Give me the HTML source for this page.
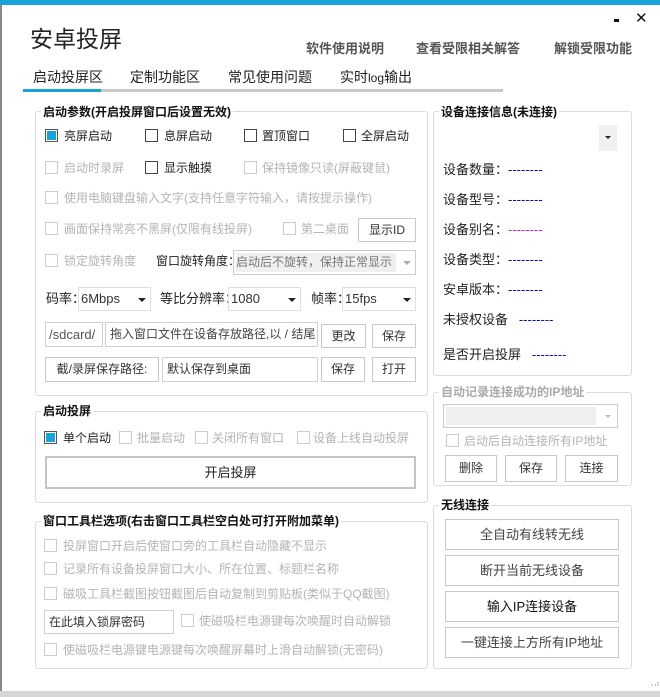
<!DOCTYPE html>
<html><head><meta charset="utf-8"><style>
*{margin:0;padding:0;box-sizing:border-box}
body{width:660px;height:697px;position:relative;overflow:hidden;background:#fff;font-family:"Liberation Sans","Microsoft YaHei","Noto Sans CJK SC",sans-serif;font-size:12px;color:#222}
.a{position:absolute;white-space:nowrap}
.grp{position:absolute;border:1px solid #dcdcdc;border-radius:3px}
.gt{position:absolute;background:#fff;font-weight:bold;font-size:12px;padding:0 2px;line-height:14px;color:#111}
.cb{position:absolute;width:13px;height:13px;border:1px solid #444;background:#fff}
.cb.d{border-color:#ccc}
.cb.on{border-color:#555;background:#1aa3d6;box-shadow:inset 0 0 0 1px #fff}
.l{position:absolute;white-space:nowrap;font-size:12px;line-height:14px}
.dis{color:#b4b4b4}
.btn{position:absolute;border:1px solid #c8c8c8;background:#fff;text-align:center;font-size:12px;color:#333}
.inp{position:absolute;border:1px solid #d0d0d0;background:#fff;font-size:12px;color:#333;padding-left:4px}
.arr{position:absolute;width:0;height:0;border-left:4px solid transparent;border-right:4px solid transparent;border-top:4px solid #222}
.dash{color:#1010a0;letter-spacing:0px}
</style></head><body>
<div class="a" style="left:0;top:0;width:660px;height:5px;background:#1aa3d6"></div>
<div class="a" style="left:0;top:5px;width:2px;height:692px;background:#888"></div>
<div class="a" style="left:0;top:691px;width:660px;height:6px;background:#d6d6d6"></div>

<div class="a" style="left:30px;top:25px;font-size:23px;color:#222;line-height:28px">安卓投屏</div>
<div class="a" style="left:306px;top:38px;font-size:13px;font-weight:bold;color:#555">软件使用说明</div>
<div class="a" style="left:416px;top:38px;font-size:13px;font-weight:bold;color:#555">查看受限相关解答</div>
<div class="a" style="left:554px;top:38px;font-size:13px;font-weight:bold;color:#555">解锁受限功能</div>
<div class="a" style="left:614px;top:19px;width:5px;height:3px;background:#111"></div>
<div class="a" style="left:635px;top:9px;font-size:15px;color:#111">✕</div>

<div class="a" style="left:33px;top:67px;font-size:14px">启动投屏区</div>
<div class="a" style="left:130px;top:67px;font-size:14px">定制功能区</div>
<div class="a" style="left:228px;top:67px;font-size:14px">常见使用问题</div>
<div class="a" style="left:340px;top:67px;font-size:14px">实时<span style="font-size:12px">log</span>输出</div>
<div class="a" style="left:23px;top:89px;width:480px;height:3px;background:#c8c8c8"></div>
<div class="a" style="left:23px;top:89px;width:78px;height:3px;background:#1aa3d6"></div>

<!-- group 1 -->
<div class="grp" style="left:35px;top:111px;width:393px;height:285px"></div>
<div class="gt" style="left:41px;top:105px">启动参数(开启投屏窗口后设置无效)</div>
<div class="cb on" style="left:45px;top:129px"></div><div class="l" style="left:64px;top:129px">亮屏启动</div>
<div class="cb" style="left:145px;top:129px"></div><div class="l" style="left:164px;top:129px">息屏启动</div>
<div class="cb" style="left:244px;top:129px"></div><div class="l" style="left:262px;top:129px">置顶窗口</div>
<div class="cb" style="left:343px;top:129px"></div><div class="l" style="left:361px;top:129px">全屏启动</div>

<div class="cb d" style="left:45px;top:161px"></div><div class="l dis" style="left:64px;top:161px">启动时录屏</div>
<div class="cb" style="left:145px;top:161px"></div><div class="l" style="left:164px;top:161px">显示触摸</div>
<div class="cb d" style="left:244px;top:161px"></div><div class="l dis" style="left:262px;top:161px">保持镜像只读(屏蔽键鼠)</div>

<div class="cb d" style="left:45px;top:191px"></div><div class="l dis" style="left:64px;top:191px">使用电脑键盘输入文字(支持任意字符输入，请按提示操作)</div>

<div class="cb d" style="left:45px;top:222px"></div><div class="l dis" style="left:64px;top:222px">画面保持常亮不黑屏(仅限有线投屏)</div>
<div class="cb d" style="left:283px;top:222px"></div><div class="l dis" style="left:301px;top:222px">第二桌面</div>
<div class="btn" style="left:358px;top:218px;width:58px;height:24px;line-height:22px">显示ID</div>

<div class="cb d" style="left:45px;top:254px"></div><div class="l dis" style="left:64px;top:254px">锁定旋转角度</div>
<div class="l" style="left:156px;top:254px">窗口旋转角度：</div>
<div class="inp" style="left:233px;top:250px;width:183px;height:25px;border-color:#ccc;padding:2px"><div style="background:#f0f0f0;height:19px;width:160px;line-height:19px;color:#777">启动后不旋转，保持正常显示</div></div>
<div class="arr" style="left:403px;top:261px;border-top-color:#aaa"></div>

<div class="l" style="left:46px;top:292px;font-size:13px">码率：</div>
<div class="inp" style="left:78px;top:287px;width:73px;height:24px;line-height:22px;font-size:13px;padding-left:2px;border-color:#e0e0e0">6Mbps</div><div class="arr" style="left:138px;top:298px"></div>
<div class="l" style="left:160px;top:292px;font-size:13px">等比分辨率：</div>
<div class="inp" style="left:228px;top:287px;width:73px;height:24px;line-height:22px;font-size:13px;padding-left:2px;border-color:#e0e0e0">1080</div><div class="arr" style="left:288px;top:298px"></div>
<div class="l" style="left:311px;top:292px;font-size:13px">帧率：</div>
<div class="inp" style="left:342px;top:287px;width:74px;height:24px;line-height:22px;font-size:13px;padding-left:2px;border-color:#e0e0e0">15fps</div><div class="arr" style="left:403px;top:298px"></div>

<div class="inp" style="left:45px;top:322px;width:58px;height:25px;line-height:23px;color:#555;font-size:13px;padding-left:3px">/sdcard/</div>
<div class="inp" style="left:105px;top:322px;width:213px;height:25px;line-height:23px;color:#444">拖入窗口文件在设备存放路径,以 / 结尾</div>
<div class="btn" style="left:321px;top:324px;width:45px;height:24px;line-height:22px">更改</div>
<div class="btn" style="left:372px;top:324px;width:44px;height:24px;line-height:22px">保存</div>

<div class="btn" style="left:45px;top:357px;width:114px;height:25px;line-height:23px">截/录屏保存路径:</div>
<div class="inp" style="left:162px;top:357px;width:156px;height:25px;line-height:23px">默认保存到桌面</div>
<div class="btn" style="left:321px;top:357px;width:44px;height:25px;line-height:23px">保存</div>
<div class="btn" style="left:372px;top:357px;width:44px;height:25px;line-height:23px">打开</div>

<!-- group 2 -->
<div class="grp" style="left:35px;top:411px;width:393px;height:92px"></div>
<div class="gt" style="left:41px;top:404px">启动投屏</div>
<div class="cb on" style="left:44px;top:431px"></div><div class="l" style="left:63px;top:431px">单个启动</div>
<div class="cb d" style="left:119px;top:431px"></div><div class="l dis" style="left:137px;top:431px">批量启动</div>
<div class="cb d" style="left:195px;top:431px"></div><div class="l dis" style="left:212px;top:431px">关闭所有窗口</div>
<div class="cb d" style="left:297px;top:431px"></div><div class="l dis" style="left:313px;top:431px">设备上线自动投屏</div>
<div class="btn" style="left:45px;top:456px;width:371px;height:33px;line-height:29px;border:2px solid #c4c4c4;font-size:13px;color:#222">开启投屏</div>

<!-- group 3 -->
<div class="grp" style="left:35px;top:521px;width:393px;height:148px"></div>
<div class="gt" style="left:41px;top:514px">窗口工具栏选项(右击窗口工具栏空白处可打开附加菜单)</div>
<div class="cb d" style="left:44px;top:539px"></div><div class="l dis" style="left:63px;top:539px">投屏窗口开启后使窗口旁的工具栏自动隐藏不显示</div>
<div class="cb d" style="left:44px;top:562px"></div><div class="l dis" style="left:63px;top:562px">记录所有设备投屏窗口大小、所在位置、标题栏名称</div>
<div class="cb d" style="left:44px;top:587px"></div><div class="l dis" style="left:63px;top:587px">磁吸工具栏截图按钮截图后自动复制到剪贴板(类似于QQ截图)</div>
<div class="inp" style="left:44px;top:610px;width:130px;height:24px;line-height:22px;color:#333">在此填入锁屏密码</div>
<div class="cb d" style="left:181px;top:614px"></div><div class="l dis" style="left:199px;top:614px">使磁吸栏电源键每次唤醒时自动解锁</div>
<div class="cb d" style="left:44px;top:643px"></div><div class="l dis" style="left:63px;top:643px">使磁吸栏电源键电源键每次唤醒屏幕时上滑自动解锁(无密码)</div>

<!-- right group 1 -->
<div class="grp" style="left:433px;top:111px;width:199px;height:265px"></div>
<div class="gt" style="left:439px;top:105px">设备连接信息(未连接)</div>
<div class="a" style="left:599px;top:125px;width:18px;height:26px;background:#f0f0f0"></div>
<div class="arr" style="left:605px;top:136px;border-left-width:3px;border-right-width:3px;border-top-width:3px"></div>
<div class="l" style="left:443px;top:163px;font-size:13px">设备数量：<span class="dash">--------</span></div>
<div class="l" style="left:443px;top:193px;font-size:13px">设备型号：<span class="dash">--------</span></div>
<div class="l" style="left:443px;top:223px;font-size:13px">设备别名：<span class="dash" style="color:#d020d0">--------</span></div>
<div class="l" style="left:443px;top:253px;font-size:13px">设备类型：<span class="dash">--------</span></div>
<div class="l" style="left:443px;top:283px;font-size:13px">安卓版本：<span class="dash">--------</span></div>
<div class="l" style="left:443px;top:313px;font-size:13px">未授权设备&nbsp;&nbsp;&nbsp;<span class="dash">--------</span></div>
<div class="l" style="left:443px;top:348px;font-size:13px">是否开启投屏&nbsp;&nbsp;&nbsp;<span class="dash">--------</span></div>

<!-- right group 2 -->
<div class="grp" style="left:433px;top:392px;width:199px;height:94px"></div>
<div class="gt" style="left:439px;top:385px;color:#aaa">自动记录连接成功的IP地址</div>
<div class="inp" style="left:443px;top:404px;width:175px;height:24px;border-color:#ccc"><div style="position:absolute;left:2px;top:2px;width:150px;height:18px;background:#f0f0f0"></div></div>
<div class="arr" style="left:605px;top:415px;border-top-color:#bbb;border-left-width:3px;border-right-width:3px;border-top-width:3px"></div>
<div class="cb d" style="left:446px;top:434px"></div><div class="l dis" style="left:464px;top:434px">启动后自动连接所有IP地址</div>
<div class="btn" style="left:445px;top:455px;width:52px;height:27px;line-height:25px">删除</div>
<div class="btn" style="left:505px;top:455px;width:52px;height:27px;line-height:25px">保存</div>
<div class="btn" style="left:565px;top:455px;width:53px;height:27px;line-height:25px">连接</div>

<!-- wireless -->
<div class="grp" style="left:433px;top:505px;width:199px;height:164px"></div>
<div class="gt" style="left:439px;top:498px">无线连接</div>
<div class="btn" style="left:445px;top:519px;width:174px;height:31px;line-height:29px;font-size:13px;color:#444">全自动有线转无线</div>
<div class="btn" style="left:445px;top:555px;width:174px;height:31px;line-height:29px;font-size:13px;color:#444">断开当前无线设备</div>
<div class="btn" style="left:445px;top:591px;width:174px;height:31px;line-height:29px;font-size:13px;color:#111">输入IP连接设备</div>
<div class="btn" style="left:445px;top:627px;width:174px;height:31px;line-height:29px;font-size:13px;color:#444">一键连接上方所有IP地址</div>
<div class="a" style="left:648px;top:680px;font-size:8px;color:#888;line-height:8px">⠠⠴</div>
</body></html>
